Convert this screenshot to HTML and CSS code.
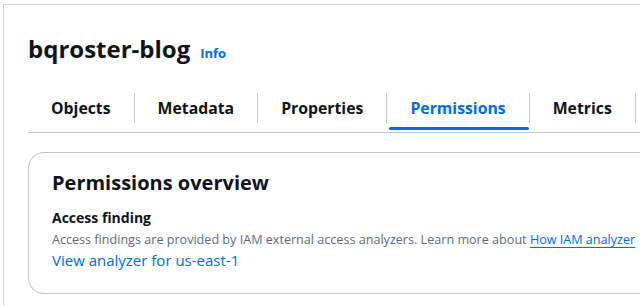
FILE: index.html
```html
<!DOCTYPE html>
<html lang="en">
<head>
<meta charset="UTF-8">
<meta name="viewport" content="width=device-width, initial-scale=1.0">
<title>bqroster-blog</title>
<link rel="stylesheet" href="styles.css">
</head>
<body>
<div class="frame">
  <div class="header">
    <h1>bqroster-blog</h1>
    <a href="#" class="info">Info</a>
  </div>
  <div class="tabs">
    <div class="tab">Objects</div>
    <div class="tab">Metadata</div>
    <div class="tab">Properties</div>
    <div class="tab active">Permissions</div>
    <div class="tab">Metrics</div>
  </div>
  <div class="card">
    <h2>Permissions overview</h2>
    <h3>Access finding</h3>
    <p class="desc">Access findings are provided by IAM external access analyzers. Learn more about <a href="#" class="ext">How IAM analyzer</a></p>
    <a href="#" class="link">View analyzer for us-east-1</a>
  </div>
</div>
</body>
</html>
```

FILE: styles.css
```css
body {
  font-family: "Open Sans", "Noto Sans", sans-serif;
  margin: 0;
  padding: 4px 0 0 3px;
  background: #fff;
  color: #0f141a;
  overflow: hidden;
}

.frame {
  border-top: 1px solid #d1d1d6;
  border-left: 1px solid #d1d1d6;
  padding: 0 0 0 24px;
  height: 310px;
  white-space: nowrap;
}

.header {
  display: flex;
  align-items: baseline;
  gap: 10px;
  padding-top: 29px;
  height: 50px;
  box-sizing: border-box;
}

h1 {
  margin: 0;
  font-size: 24px;
  font-weight: 700;
  line-height: 30px;
}

.info {
  color: #006ce0;
  font-size: 13px;
  font-weight: 700;
  text-decoration: none;
}

.tabs {
  display: flex;
  margin-top: 38px;
  border-bottom: 1px solid #c6c6cd;
  height: 40px;
  box-sizing: border-box;
}

.tab {
  position: relative;
  padding: 0 23px;
  height: 30px;
  line-height: 30px;
  font-size: 15.8px;
  font-weight: 700;
  color: #0f141a;
  border-right: 1px solid #c6c6cd;
}

.tab.active {
  color: #006ce0;
}

.tab.active::after {
  content: "";
  position: absolute;
  left: 2px;
  right: 0;
  bottom: -7px;
  height: 3px;
  border-radius: 2px;
  background: #006ce0;
}

.card {
  margin-top: 19px;
  border: 1px solid #c6c6cd;
  border-right: none;
  border-radius: 16px 0 0 16px;
  padding: 15px 0 20px 23px;
  height: 142px;
  box-sizing: border-box;
}

h2 {
  margin: 0;
  font-size: 20px;
  font-weight: 700;
  line-height: 30px;
}

h3 {
  margin: 10px 0 0;
  font-size: 14px;
  font-weight: 700;
  line-height: 20px;
}

.desc {
  margin: 3px 0 0;
  font-size: 12.6px;
  line-height: 18px;
  color: #5f6b7a;
}

.ext {
  color: #006ce0;
  text-decoration: underline;
  text-underline-offset: 3px;
}

.link {
  display: block;
  font-size: 15px;
  line-height: 22px;
  color: #006ce0;
  text-decoration: none;
}
```
